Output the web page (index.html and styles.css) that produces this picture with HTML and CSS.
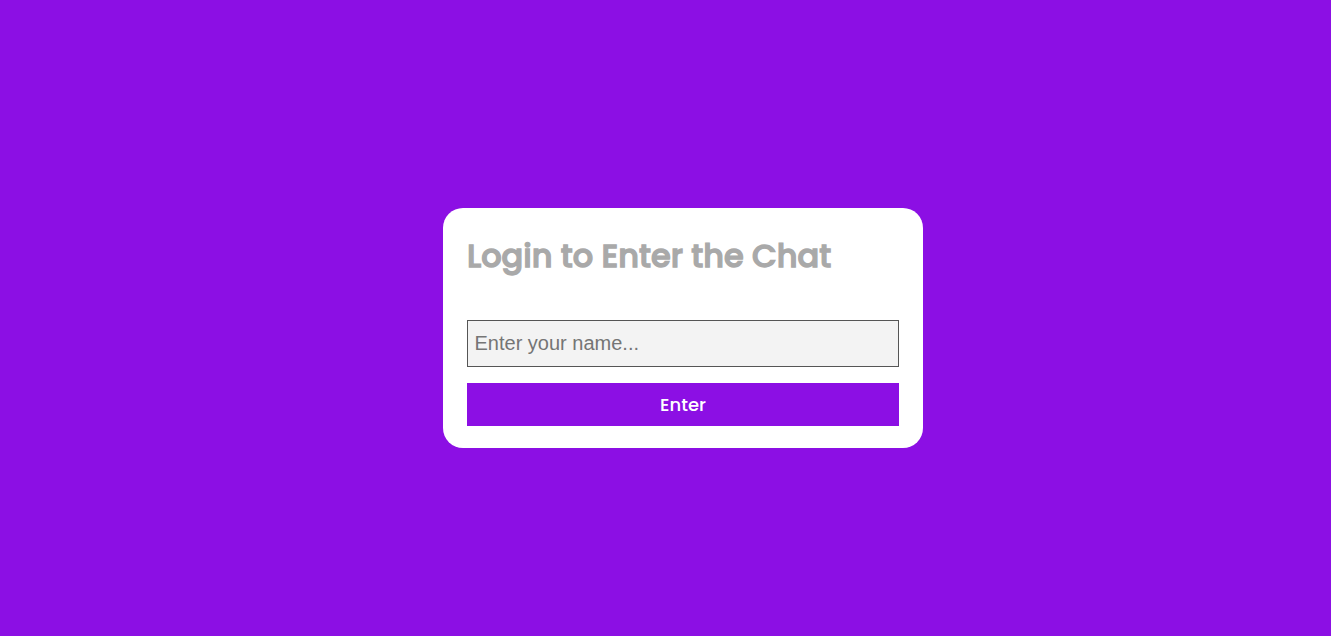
FILE: index.html
```html
<!DOCTYPE html>
<html lang="en">
<head>
<meta charset="utf-8">
<title>Chat Login</title>
<link rel="stylesheet" href="styles.css">
</head>
<body>
<main class="page">
  <form class="card">
    <h1 class="title">Login to Enter the Chat</h1>
    <input class="name" type="text" placeholder="Enter your name..." aria-label="Name">
    <button class="enter" type="button">Enter</button>
  </form>
</main>
</body>
</html>
```
FILE: styles.css
```css
* { box-sizing: border-box; margin: 0; }
body { background: #8c0fe4; }
.page {
  display: flex;
  justify-content: center;
  align-items: center;
  height: 636px;
  padding: 20px 0 0 35px;
  overflow: hidden;
}
.card {
  display: flex;
  flex-direction: column;
  width: 480px;
  height: 240px;
  padding: 24px 24px 22px;
  border-radius: 20px;
  background: #fff;
}
.title {
  height: 48px;
  margin-bottom: 40px;
  color: #a9a9a9;
  font: 500 32px/48px Poppins, Lato, sans-serif;
  -webkit-text-stroke: 1.3px #a9a9a9;
  white-space: nowrap;
}
.name {
  flex: none;
  height: 47px;
  padding: 0 6.5px;
  border: 1px solid #555;
  border-radius: 0;
  background: #f3f3f3;
  font: 20px "Liberation Sans", Arial, sans-serif;
}
.name::placeholder { color: #757575; }
.enter {
  flex: none;
  height: 43px;
  margin-top: 16px;
  padding: 0;
  border: 0;
  background: #8c0fe4;
  color: #fff;
  font: 500 18px/43px Poppins, Lato, sans-serif;
}
```
